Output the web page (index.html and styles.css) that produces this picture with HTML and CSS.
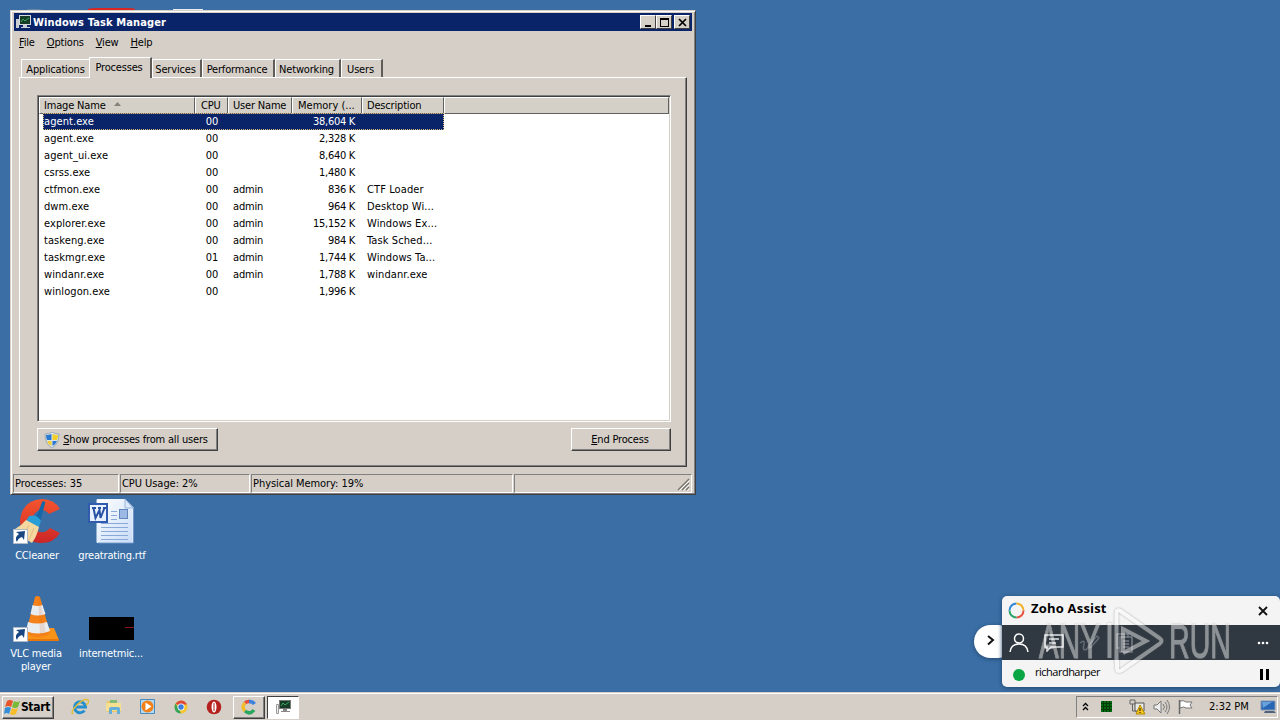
FILE: index.html
```
<!DOCTYPE html>
<html lang="en">

    <head>
        <title>Windows Task Manager</title>
        <meta charset="UTF-8">
        <link rel="stylesheet" href="styles.css">
    </head>

    <body>
        <div id="desktop">

            <!-- Desktop icons -->
            <svg class="deskIcon" id="hiddenIcons" width="204" height="6"><path d="M25 2q6-2 20 0v4H25z" fill="#6f8ba6"/><path d="M88 1q3-1 10-1h28q7 0 9 1v5H88z" fill="#dc2523"/><path d="M173 1h30v6h-30z" fill="#e9edf2"/></svg>
            <div class="deskIcon" id="iconCcleaner">
                <svg width="50" height="50" viewBox="0 0 50 50">
                    <defs><linearGradient id="red" x2="0" y2="1"><stop offset="0" stop-color="#f4552e"/><stop offset="1" stop-color="#cc2626"/></linearGradient></defs>
                    <path d="M48 12Q42 2 30 2Q10 3 8 24Q9 45 29 46Q42 46 48 36L38 31Q34 36 28 35Q20 33 20 24Q21 14 29 13Q34 13 37 17z" fill="url(#red)"/>
                    <path d="M30.500 4l3 1-5 18-5-1z" fill="#1467a8"/>
                    <path d="M17 19q8-2 12 5l-2 6-13-6z" fill="#299ed6"/>
                    <path d="M14 23l13 7q-2 9-7 16L4 36q-2-2-1-4 7-4 11-9z" fill="#f5d7a0"/>
                    <path d="M17 28l-6 10m11-7l-5 12" stroke="#e2bd82"/>
                    <rect x="1.500" y="32.500" width="14" height="14" fill="#fff" stroke="#aebac7"/>
                    <path d="M5 45q-3-5 2-8l-3-2 9-1-1 9-2-3q-4 1-5 5" fill="#174681"/>
                </svg>
                <span>CCleaner</span>
            </div>
            <div class="deskIcon" id="iconWord">
                <svg width="48" height="50" viewBox="0 0 48 50">
                    <defs><linearGradient id="sheet" x2="1" y2="1"><stop stop-color="#fff"/><stop offset="1" stop-color="#c7dcf7"/></linearGradient></defs>
                    <path d="M9 2.500h28l8 8v35H9z" fill="url(#sheet)" stroke="#eaf3ff"/><path d="M45.500 11v35H10" fill="none" stroke="#6d93c8"/>
                    <path d="M37 2v9h8z" fill="#dce9fb" stroke="#98b5dc"/>
                    <path d="M23 14.500h6m-6 4h6m-6 4h6M13 26.500h27M13 30.500h27M13 34.500h27M13 38.500h27M13 42.500h27" stroke="#8aa8d8"/>
                    <rect x="31.500" y="12.500" width="8" height="9" fill="#9cb9e5" stroke="#6386bd"/>
                    <rect x="1" y="7" width="18" height="18" fill="#e8f1ff" stroke="#315cae" stroke-width="2"/>
                    <path d="M4 11h4m2 0h3m2 0h3M5.500 11l2 10 4-8 1 8 4-10" fill="none" stroke="#2853a4" stroke-width="2"/>
                </svg>
                <span>greatrating.rtf</span>
            </div>
            <div class="deskIcon" id="iconVlc">
                <svg width="50" height="50" viewBox="0 0 50 50">
                    <path d="M15 34h28l5 12H8z" fill="#f79318"/><path d="M9 45h39v2H9z" fill="#e8780c"/>
                    <path d="M24 3q2-2 5 0l10 36q-3 4-12 4t-12-4z" fill="#f58218"/>
                    <path d="M21.500 11q5 2 10 0l3 9q-8 3-15 0zM17 28q9 3 19 0l3 9q-12 5-24 0z" fill="#e8edf2"/>
                    <path d="M27 3l2 38 6-1-6-36z" fill="#d65d07" opacity=".15"/>
                    <rect x="2.500" y="33.500" width="14" height="14" fill="#fff" stroke="#aebac7"/>
                    <path d="M6 46q-3-5 2-8l-3-2 9-1-1 9-2-3q-4 1-5 5" fill="#174681"/>
                </svg>
                <span>VLC media<br>player</span>
            </div>
            <div class="deskIcon" id="iconInternet">
                <svg width="45" height="24"><path d="M0 0h45v23H0z"/><path d="M36 10.500h9" stroke="#8a151b"/></svg>
                <span>internetmic...</span>
            </div>

            <!-- Task Manager -->
            <div id="taskManager">
                <div class="titleBar">
                    <svg width="17" height="16" viewBox="0 0 17 16"><path d="M1 5h3v9H1z" fill="#c9ced0"/><rect x="4.500" y="1.500" width="11" height="9" fill="#163c28" stroke="#d6dbda"/><path d="M6 8l2-3 2 2 4-3" stroke="#36a85b" fill="none"/><path d="M8 11h4v2h3v1H6v-1h2z" fill="#c9ced0"/></svg>
                    <b>Windows Task Manager</b>
                    <div class="titleButtons">
                        <i><svg width="13" height="11"><path d="M3 8h6v2H3z"/></svg></i>
                        <i><svg width="13" height="11"><path d="M2 1h9v9H2zm1 2v6h7V3z" fill-rule="evenodd"/></svg></i>
                        <i class="close"><svg width="13" height="11"><path d="M3 2l7 7m0-7L3 9" stroke="#000" stroke-width="1.700"/></svg></i>
                    </div>
                </div>
                <div class="menu"><span><u>F</u>ile</span><span><u>O</u>ptions</span><span><u>V</u>iew</span><span><u>H</u>elp</span></div>
                <div class="tabs">
                    <div class="tab t1"><span>Applications</span></div>
                    <div class="tab t2 active"><span>Processes</span></div>
                    <div class="tab t3"><span>Services</span></div>
                    <div class="tab t4"><span>Performance</span></div>
                    <div class="tab t5"><span>Networking</span></div>
                    <div class="tab t6"><span>Users</span></div>
                </div>
                <div class="panel">
                    <div class="list">
                        <div class="row head"><span>Image Name <svg width="7" height="4"><path d="M0 4l3.500-4L7 4z" fill="#858078"/></svg></span><span>CPU</span><span>User Name</span><span>Memory (...</span><span>Description</span><span></span></div>
                        <div class="row selected"><span>agent.exe</span><span>00</span><span></span><span>38,604 K</span><span></span></div>
                        <div class="row"><span>agent.exe</span><span>00</span><span></span><span>2,328 K</span><span></span></div>
                        <div class="row"><span>agent_ui.exe</span><span>00</span><span></span><span>8,640 K</span><span></span></div>
                        <div class="row"><span>csrss.exe</span><span>00</span><span></span><span>1,480 K</span><span></span></div>
                        <div class="row"><span>ctfmon.exe</span><span>00</span><span>admin</span><span>836 K</span><span>CTF Loader</span></div>
                        <div class="row"><span>dwm.exe</span><span>00</span><span>admin</span><span>964 K</span><span>Desktop Wi...</span></div>
                        <div class="row"><span>explorer.exe</span><span>00</span><span>admin</span><span>15,152 K</span><span>Windows Ex...</span></div>
                        <div class="row"><span>taskeng.exe</span><span>00</span><span>admin</span><span>984 K</span><span>Task Sched...</span></div>
                        <div class="row"><span>taskmgr.exe</span><span>01</span><span>admin</span><span>1,744 K</span><span>Windows Ta...</span></div>
                        <div class="row"><span>windanr.exe</span><span>00</span><span>admin</span><span>1,788 K</span><span>windanr.exe</span></div>
                        <div class="row"><span>winlogon.exe</span><span>00</span><span></span><span>1,996 K</span><span></span></div>
                    </div>
                    <div class="actions">
                        <div class="button showAll"><svg width="16" height="16" viewBox="0 0 16 16"><path d="M8 0q3 2 7 2 0 10-7 14Q1 12 1 2q4 0 7-2z" fill="#dce4ea" stroke="#8496a5" stroke-width=".7"/><path d="M7.500 2v6H3Q2 6 2 3q3 0 5.500-1z" fill="#2b78d1"/><path d="M8.500 2Q11 3 14 3q0 3-1 5H8.500zM3 9h4.500v5Q4 12 3 9z" fill="#f3cf28"/><path d="M8.500 9H13q-1 3-4.500 5z" fill="#2b78d1"/></svg><span><u>S</u>how processes from all users</span></div>
                        <div class="button end"><span><u>E</u>nd Process</span></div>
                    </div>
                </div>
                <div class="status"><span>Processes: 35</span><span>CPU Usage: 2%</span><span>Physical Memory: 19%</span><span><svg width="13" height="13"><path d="M1 12L12 1M5 12l7-7M9 12l3-3" stroke="#77736b" stroke-width="1.300"/><path d="M2.500 12.500l10-10m-6 10l6-6m-2 6l2-2" stroke="#fff"/></svg></span></div>
            </div>

            <!-- Zoho Assist -->
            <div id="expand"><svg width="8" height="11"><path d="M1 1l5 4-5 4.500" fill="none" stroke="#111" stroke-width="2"/></svg></div>
            <div id="zoho">
                <div class="zohoTitle">
                    <svg width="17" height="17" viewBox="0 0 17 17" fill="none" stroke-width="2"><path d="M1.500 8.500a7 7 0 0 1 7-7" stroke="#3287d8"/><path d="M8.500 1.500a7 7 0 0 1 7 7" stroke="#efb22c"/><path d="M15.500 8.500a7 7 0 0 1-7 7" stroke="#e65343"/><path d="M8.500 15.500a7 7 0 0 1-7-7" stroke="#2da568"/></svg>
                    <b>Zoho Assist</b>
                    <svg class="zohoClose" width="10" height="10"><path d="M1 1l8 8m0-8L1 9" stroke="#111" stroke-width="1.800"/></svg>
                </div>
                <div class="zohoTools">
                    <svg width="20" height="20" fill="none" stroke="#fff" stroke-width="1.500"><circle cx="10" cy="5.500" r="4.500"/><path d="M1 19q1-8 9-8t9 8"/></svg>
                    <svg width="20" height="18" fill="none" stroke="#e5e7e9" stroke-width="1.500"><path d="M1 1h18v12H7l-4 4v-4H1zM5 5h10M5 9h7"/></svg>
                    <svg width="22" height="18" fill="none" stroke="#626a73" stroke-width="1.500"><path d="M1 9q5-4 4 1-2 8 3 5l2-4 8-9 2 2-8 9-3 1 1-3"/></svg>
                    <svg width="18" height="20" fill="none" stroke="#777e87" stroke-width="1.500"><path d="M4 15H1V1h11v3M4 4h12v15H4zM7 8h6M7 11h6M7 14h6"/></svg>
                    <svg class="dots" width="12" height="4" fill="#fff"><circle cx="2" cy="2" r="1.300"/><circle cx="6" cy="2" r="1.300"/><circle cx="10" cy="2" r="1.300"/></svg>
                </div>
                <div class="zohoUser"><i></i><span>richardharper</span><svg width="10" height="11"><path d="M0 0h3v11H0zM6 0h3v11H6z"/></svg></div>
            </div>
            <svg id="watermark" width="210" height="80" fill="#fff">
                <text x="2" y="52" font-size="48" textLength="61" lengthAdjust="spacingAndGlyphs">ANY</text>
                <path d="M72.500 17v35m7 5V7q0-4 4-2l39 27q4 3 0 6L85 64q-5 3-5-2v-8m6-8V23l23 12-23 12" fill="none" stroke="#fff" stroke-width="4"/>
                <text x="132" y="52" font-size="48" textLength="62" lengthAdjust="spacingAndGlyphs">RUN</text>
            </svg>

            <!-- Taskbar -->
            <div id="taskbar">
                <div class="start"><svg width="17" height="16" viewBox="0 0 17 16"><path d="M3 2q3-2 6 0L7 8Q4 6 1 8z" fill="#e95328"/><path d="M10 2q3 2 6 0l-2 6q-3 2-6 0z" fill="#78b936"/><path d="M1 9q3-2 6 0l-2 6q-2-2-5 0z" fill="#348fd7"/><path d="M8 9q3 2 6 0l-2 6q-3 2-6 0z" fill="#f6bd28"/></svg><b>Start</b></div>
                <div class="quick">
                    <svg width="18" height="18" viewBox="0 0 18 18" fill="none"><path d="M13.500 12.500A5.500 5.500 0 1 1 14.500 9H5" stroke="#258fce" stroke-width="3"/><path d="M2 16Q-1 14 6 7t11-5q2 2-2 5" stroke="#dfbd38" stroke-width="1.500"/></svg>
                    <svg width="18" height="18" viewBox="0 0 18 18"><path d="M2 3h5l1 2h8v9H2z" fill="#eac85e"/><path d="M5 2h7v3H5z" fill="#83bd75"/><path d="M1 5h15v8H1z" fill="#f7df91"/><path d="M4 16v-5q0-2 2-2h7q2 0 2 2v5h-3v-4H7v4z" fill="#64aed9"/></svg>
                    <svg width="18" height="18" viewBox="0 0 18 18"><path d="M1.500 1.500h14v14h-14z" fill="#b2d9f1" stroke="#478bc0"/><circle cx="8.500" cy="8.500" r="6" fill="#f18018"/><path d="M6.500 4.500l6 4-6 4z" fill="#fff"/></svg>
                    <svg width="16" height="16" viewBox="0 0 16 16"><circle cx="8" cy="8" r="6.500" fill="#f4c52d"/><path d="M8 8L2.500 4.500Q5 1.500 8 1.500q4 0 6 4H8z" fill="#dc493b"/><path d="M2.500 4.500L6 10l2 4.500Q1.500 14 1.500 8q0-2 1-3.500z" fill="#38a35a"/><circle cx="8" cy="8" r="3.500" fill="#fff"/><circle cx="8" cy="8" r="2.700" fill="#397ede"/></svg>
                    <svg class="opera" width="16" height="16" viewBox="0 0 16 16"><circle cx="8" cy="8" r="7.300" fill="#b51f1c"/><ellipse cx="8" cy="8" rx="2.500" ry="5.500" fill="#fff"/><path d="M8 4v8" stroke="#b51f1c"/></svg>
                </div>
                <div class="task"><svg width="16" height="16" fill="none" stroke-width="3.500"><path d="M4 4Q6 2 9 2.500" stroke="#e34e3d"/><path d="M8 2.500q4 0 5.500 2.500" stroke="#3c82de"/><path d="M4 4q-4 4 0 8" stroke="#f2bb2b"/><path d="M4 12q5 4 9-1" stroke="#2ca55e"/></svg></div>
                <div class="task pressed"><svg width="17" height="16" viewBox="0 0 17 16"><path d="M1.500 5.500h2v9h-2z" fill="#eee" stroke="#999"/><rect x="4.500" y="1.500" width="11" height="8" fill="#163c28" stroke="#777"/><path d="M6 7l2-3 2 2 4-3" stroke="#36a85b" fill="none"/><path d="M8 10h4v2h3v1H6v-1h2z" fill="#888"/></svg></div>
                <div class="tray">
                    <svg class="chevrons" width="7" height="10" fill="none" stroke="#000" stroke-width="1.300"><path d="M1 4l2.500-2.500L6 4M1 8l2.500-2.500L6 8"/></svg>
                    <svg class="cpu" width="12" height="12"><path d="M0 0h11v11H0z" fill="#056a12"/><path d="M0 2.500h11M0 5.500h11M0 8.500h11M2.500 0v11M5.500 0v11M8.500 0v11" stroke="#003c05"/></svg>
                    <svg class="network" width="17" height="16"><path d="M1 1h5v4H1zM3.500 5v7H8" fill="none" stroke="#666"/><path d="M6 4h9v8H6z" fill="#e7e8e8" stroke="#555"/><path d="M11 6l5 9H7z" fill="#f6c51b" stroke="#b58a00"/><path d="M11 9v3m0 1v1" stroke="#111"/></svg>
                    <svg class="volume" width="17" height="16" fill="none" stroke="#777"><path d="M1 6h3l4-4v12l-4-4H1z" fill="#eee"/><path d="M10 5q3 3 0 6m2-8q4 5 0 10m2-12q5 7 0 14"/></svg>
                    <svg class="flag" width="17" height="16"><path d="M2.500 1v14" stroke="#666" stroke-width="1.500"/><path d="M3 2q4-1 6 1h6l-2 3 2 3H9Q7 7 3 9z" fill="#fff" stroke="#777"/></svg>
                    <span>2:32 PM</span>
                    <svg class="show" width="17" height="14"><path d="M1 1h14v9H1z" fill="#2765b5" stroke="#8196b4"/><path d="M2 2h10L3 8z" fill="#68a2db"/><path d="M5 11h9l2 2H4z" fill="#52617a"/></svg>
                </div>
            </div>
        </div>
    </body>

</html>
```
FILE: styles.css
```
* {
    box-sizing: border-box;
}

body {
    margin: 0;
    overflow: hidden;
    font: 11px/14px "DejaVu Sans Condensed", "Noto Sans", sans-serif;
    letter-spacing: -0.18px;
    color: #000;
}

svg {
    display: block;
    flex: none;
}

#desktop {
    position: relative;
    width: 1280px;
    height: 720px;
    background: #3a6ea5;
}

/* Desktop icons */
.deskIcon {
    position: absolute;
    display: flex;
    flex-direction: column;
    align-items: center;
    width: 100px;
    color: #fff;
    text-align: center;
    line-height: 13px;
    white-space: nowrap;
}

#hiddenIcons {
    left: 0;
    top: 8px;
    width: 204px;
}

#iconCcleaner {
    left: -13px;
    top: 497px;
    gap: 2px;
}

#iconWord {
    left: 62px;
    top: 497px;
    gap: 2px;
}

#iconVlc {
    left: -14px;
    top: 594px;
    gap: 3px;
}

#iconInternet {
    left: 61px;
    top: 617px;
    gap: 6px;
}

/* Task Manager */
#taskManager {
    position: absolute;
    left: 10px;
    top: 10px;
    width: 686px;
    height: 485px;
    padding: 2px 3px 3px 2px;
    background: #d5cfc8;
    border: 1px solid;
    border-color: #d4d0c8 #404040 #404040 #d4d0c8;
    box-shadow: inset 1px 1px #fff, inset -1px -1px #808080;
    display: flex;
    flex-direction: column;
}

.titleBar {
    display: flex;
    align-items: center;
    height: 18px;
    margin-left: 1px;
    padding: 0 2px 0 1px;
    background: #0a246a;
    color: #fff;
    flex: none;
}

.titleBar b {
    margin-top: 1px;
    margin-left: 1px;
    line-height: 15px;
    letter-spacing: 0.12px;
}

.titleButtons {
    display: flex;
    margin-left: auto;
}

.titleButtons i {
    width: 16px;
    height: 14px;
    padding: 1px;
    background: #d4d0c8;
    border: 1px solid;
    border-color: #fff #404040 #404040 #fff;
}

.titleButtons .close {
    margin-left: 2px;
}

.menu {
    display: flex;
    height: 27px;
    padding: 5px 6px;
    gap: 12px;
    flex: none;
}

.tabs {
    display: flex;
    align-items: flex-end;
    height: 19px;
    margin-left: 8px;
    flex: none;
}

.tab {
    display: flex;
    justify-content: center;
    height: 18px;
    padding-top: 3px;
    border-top: 1px solid #fff;
    border-left: 1px solid #fff;
    border-right: 2px solid #605d59;
}

.tab span {
    margin-left: -2px;
}

.t1 {
    width: 68px;
    border-right: 0;
}

.t1 span {
    margin-left: 0;
}

.t2 {
    width: 63px;
}

.t3 {
    width: 50px;
}

.t4 {
    width: 73px;
}

.t5 {
    width: 66px;
}

.t6 {
    width: 42px;
}

.tab.active {
    position: relative;
    z-index: 2;
    height: 21px;
    margin-bottom: -1px;
    background: #d5cfc8;
}

.panel {
    width: 668px;
    height: 390px;
    margin-left: 6px;
    padding: 17px 15px 0 17px;
    border: 1px solid;
    border-color: #fff #404040 #404040 #fff;
    box-shadow: inset -1px -1px #808080;
    flex: none;
}

.list {
    height: 327px;
    background: #fff;
    border: 1px solid;
    border-color: #808080 #fff #fff #808080;
    box-shadow: inset 1px 1px #404040, inset -1px -1px #d4d0c8;
    padding: 1px;
}

.row {
    display: grid;
    grid-template-columns: 151px 33px 64px 70px 83px;
    width: 401px;
    height: 17px;
    margin-left: 4px;
    line-height: 18px;
    white-space: nowrap;
}

.row span:nth-child(1) {
    padding-left: 1px;
    letter-spacing: 0.07px;
}

.row span:nth-child(2) {
    text-align: right;
    padding-right: 9px;
}

.row span:nth-child(3) {
    padding-left: 6px;
}

.row span:nth-child(4) {
    text-align: right;
    padding-right: 6px;
    letter-spacing: -0.28px;
}

.row span:nth-child(5) {
    padding-left: 6px;
    letter-spacing: 0.1px;
}

.row.selected {
    background: #0a246a;
    color: #fff;
    outline: 1px dotted #d9b97b;
    outline-offset: -1px;
}

.row.head {
    grid-template-columns: 156px 33px 64px 70px 82px 1fr;
    width: auto;
    height: 16px;
    margin-left: 0;
    background: #d4d0c8;
}

.row.head span {
    padding: 0 4px;
    text-align: left;
    line-height: 15px;
    letter-spacing: -0.18px;
    border: 1px solid;
    border-color: #fff #606060 #606060 #fff;
}

.row.head span:nth-child(2) {
    padding-left: 5px;
}

.row.head span:nth-child(4) {
    padding-left: 5px;
    letter-spacing: 0;
}

.row.head svg {
    display: inline-block;
    margin: 0 0 3px 5px;
}

.actions {
    display: flex;
    justify-content: space-between;
    margin-top: 6px;
}

.button {
    display: flex;
    align-items: center;
    justify-content: center;
    height: 23px;
    gap: 3px;
    border: 1px solid;
    border-color: #fff #404040 #404040 #fff;
    box-shadow: inset -1px -1px #808080;
}

.showAll {
    width: 181px;
    padding-right: 3px;
}

.end {
    width: 100px;
    padding-right: 2px;
}

.status {
    display: grid;
    grid-template-columns: 106px 130px 262px 1fr;
    gap: 1px;
    height: 18px;
    margin-top: 7px;
    flex: none;
}

.status span {
    padding: 0 1px;
    line-height: 17px;
    letter-spacing: -0.05px;
    border: 1px solid;
    border-color: #808080 #fff #fff #808080;
}

.status svg {
    margin: 3px 0 0 auto;
}

/* Zoho Assist */
#expand {
    position: absolute;
    left: 974px;
    top: 625px;
    width: 40px;
    height: 33px;
    padding: 10px 0 0 13px;
    background: #fff;
    border-radius: 17px;
    box-shadow: 0 1px 4px #25476b;
}

#zoho {
    position: absolute;
    left: 1002px;
    top: 596px;
    width: 278px;
    height: 91px;
    background: #f4f4f5;
    border-radius: 5px;
    overflow: hidden;
    box-shadow: 0 1px 4px #25476b;
}

.zohoTitle {
    display: flex;
    align-items: center;
    height: 29px;
    padding: 0 12px 0 6px;
    gap: 6px;
}

.zohoTitle b {
    margin-top: -5px;
    font: bold 13px "Open Sans", "Noto Sans", sans-serif;
    letter-spacing: 0.2px;
}

.zohoClose {
    margin-left: auto;
}

.zohoTools {
    display: flex;
    align-items: center;
    height: 35px;
    gap: 15px;
    padding: 0 11px 0 7px;
    background: #303841;
}

.dots {
    margin-left: auto;
}

.zohoUser {
    display: flex;
    align-items: center;
    padding: 0 10px 0 11px;
    height: 25px;
    font: 11px "Open Sans", "Noto Sans", sans-serif;
    letter-spacing: -0.5px;
}

.zohoUser i {
    width: 12px;
    height: 12px;
    margin: 4px 10px 0 0;
    background: #08a645;
    border-radius: 50%;
}

.zohoUser span {
    margin-top: -3px;
}

.zohoUser svg {
    margin: 3px 0 0 auto;
}

#watermark {
    position: absolute;
    left: 1037px;
    top: 606px;
    opacity: 0.45;
    font-family: "Liberation Sans", sans-serif;
    letter-spacing: 0;
    filter: drop-shadow(0 0 1px #555);
}

#watermark text {
    stroke: #fff;
    stroke-width: 1px;
}

/* Taskbar */
#taskbar {
    position: absolute;
    left: 0;
    top: 692px;
    width: 1280px;
    height: 28px;
    display: flex;
    align-items: center;
    padding-top: 1px;
    background: #d5cfc8;
    border-top: 1px solid #d4d0c8;
    box-shadow: inset 0 1px #fff;
}

.start,
.task {
    display: flex;
    align-items: center;
    justify-content: center;
    height: 23px;
    border: 1px solid;
    border-color: #fff #404040 #404040 #fff;
    box-shadow: inset -1px -1px #808080;
}

.start {
    width: 52px;
    margin-left: 2px;
    padding-right: 2px;
    font-size: 12px;
    letter-spacing: -0.3px;
}

.quick {
    display: flex;
    align-items: center;
    width: 179px;
    padding-left: 17px;
    gap: 16px;
}

.opera {
    margin-left: 1px;
}

.task {
    width: 32px;
}

.task.pressed {
    margin-left: 2px;
    background: #fff;
    border-color: #404040 #fff #fff #404040;
    box-shadow: none;
}

.tray {
    display: flex;
    align-items: center;
    width: 202px;
    height: 22px;
    margin-left: auto;
    margin-right: 2px;
    border: 1px solid;
    border-color: #808080 #fff #fff #808080;
}

.chevrons {
    margin-left: 5px;
}

.cpu {
    margin-left: 12px;
}

.network {
    margin-left: 16px;
}

.volume {
    margin-left: 7px;
}

.flag {
    margin-left: 7px;
}

.tray span {
    margin-left: 15px;
    width: 41px;
    white-space: nowrap;
    letter-spacing: 0;
}

.show {
    margin-left: auto;
}
```
